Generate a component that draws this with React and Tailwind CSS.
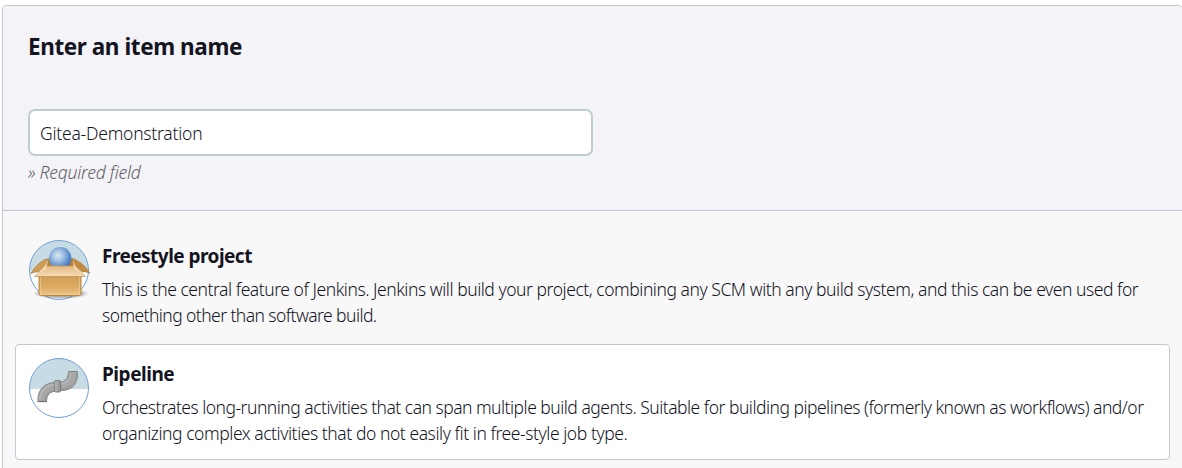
function Badge({ id, base, children }) {
  return (
    <svg viewBox="0 0 66 66" className="-mx-[3px] -my-[3px] block size-[66px] shrink-0">
      <defs>
        <clipPath id={`${id}-sky`}>
          <rect x="0" y="0" width="66" height={base} />
        </clipPath>
      </defs>
      <circle cx="33" cy="33" r="29.500" fill="#fff" />
      <circle cx="33" cy="33" r="29.500" fill="#c7dbe5" clipPath={`url(#${id}-sky)`} />
      <circle cx="33" cy="33" r="29.500" fill="none" stroke="#6fa1d8" strokeWidth="1" />
      {children}
    </svg>
  );
}

function BoxIcon() {
  return (
    <Badge id="box" base={34}>
      <defs>
        <linearGradient id="box-front" x1="0" y1="0" x2="0" y2="1">
          <stop offset="0" stopColor="#c08a40" />
          <stop offset="0.2" stopColor="#d6a25a" />
          <stop offset="0.6" stopColor="#dcab64" />
          <stop offset="1" stopColor="#efc688" />
        </linearGradient>
        <linearGradient id="box-flap" x1="0" y1="0" x2="0" y2="1">
          <stop offset="0" stopColor="#e3b981" />
          <stop offset="1" stopColor="#f5dcb6" />
        </linearGradient>
        <radialGradient id="box-ball" cx="0.4" cy="0.38" r="0.65">
          <stop offset="0" stopColor="#dce8ea" />
          <stop offset="0.35" stopColor="#a5c4e5" />
          <stop offset="0.75" stopColor="#5f90cd" />
          <stop offset="1" stopColor="#3f70b5" />
        </radialGradient>
        <radialGradient id="box-shadow">
          <stop offset="0" stopColor="#333" stopOpacity="0.65" />
          <stop offset="0.75" stopColor="#444" stopOpacity="0.35" />
          <stop offset="1" stopColor="#555" stopOpacity="0" />
        </radialGradient>
      </defs>
      <ellipse cx="35" cy="56.500" rx="28" ry="5.500" fill="url(#box-shadow)" />
      <path d="M23 21.500H46L53 31H16Z" fill="#b98136" />
      <path d="M23 21.500Q14 22.500 4.500 36.500Q8 35 13 34.500L19 29Z" fill="#cf9c57" stroke="#a97735" strokeWidth="0.7" />
      <path d="M46 21.500Q55 23.500 64 36Q60 34.500 56 34.500L50 29Z" fill="#c48b3e" stroke="#a97735" strokeWidth="0.7" />
      <circle cx="34.200" cy="21.200" r="11.200" fill="url(#box-ball)" />
      <path d="M13 37.500H55V56Q55 58.500 52.500 58.500H15.500Q13 58.500 13 56Z" fill="url(#box-front)" stroke="#b8873f" strokeWidth="1" />
      <path d="M14.500 40V57.200H53.500V40" fill="none" stroke="#f2cf99" strokeWidth="0.9" opacity="0.75" />
      <path d="M18.500 29H49.500L59.500 39.500H8.500Z" fill="url(#box-flap)" stroke="#c79759" strokeWidth="0.8" />
      <path d="M22.500 22.500L18 30L9.500 38.800L20 31.500ZM46.500 22.500L50 30L58.500 38.800L48 31.500Z" fill="#f6dfbb" opacity="0.85" />
    </Badge>
  );
}

function PipeIcon() {
  return (
    <Badge id="pipe" base={34}>
      <defs>
        <linearGradient id="pipe-joint" x1="0" x2="1">
          <stop offset="0" stopColor="#bdbdbd" />
          <stop offset="1" stopColor="#8d8d8d" />
        </linearGradient>
      </defs>
      <path d="M12 46.500C11 35 18.500 27.500 30 27.500C38.500 27.500 42.500 24.500 42.500 16.500H51.500C52 28 47 35.500 35 35.500C26 35.500 20.500 38 20.500 46.500Z" fill="#a8a8a8" stroke="#848484" strokeWidth="1" />
      <path d="M14 45.500C13.500 35 21 29.500 30 29.500C40 29.500 44.500 26 44.500 18" fill="none" stroke="#b8b8b8" strokeWidth="1.500" />
      <path d="M19.500 45C19.500 37 26 34.500 34 34.200C45 34 50.500 28 50.500 18" fill="none" stroke="#969696" strokeWidth="1" />
      <path d="M11.500 46.500H21" stroke="#777" strokeWidth="1.300" />
      <rect x="28.500" y="25.500" width="6.200" height="11.500" rx="1.500" fill="url(#pipe-joint)" stroke="#777" strokeWidth="0.9" />
    </Badge>
  );
}

function Item({ icon, title, titleClass, lines, className }) {
  return (
    <li className={`flex gap-[13px] rounded-[4px] border pl-[13px] pt-[13px] ${className}`}>
      {icon}
      <div className="min-w-0 whitespace-nowrap">
        <h2 className={`mt-[3px] text-[19px] font-bold leading-[26px] ${titleClass}`}>{title}</h2>
        <p className="mt-[7px] text-[17.500px] font-light leading-[26px]">
          {lines.map((line) => (
            <span key={line.text} className={`block ${line.className}`}>{line.text}</span>
          ))}
        </p>
      </div>
    </li>
  );
}

export default function App() {
  return (
    <div className="h-[468px] w-full overflow-hidden bg-white pl-[2px] pt-[5px] font-['Noto_Sans','Open_Sans',sans-serif] text-[#14141f]">
      <main className="-mr-px h-[480px] rounded-[4px] border border-[#bfcad0] bg-[#f8f8f8]">
        <section className="h-[205px] rounded-t-[3px] border-b border-[#bfcad0] bg-[#f3f3f8] pl-[25px] pt-[26px]">
          <label htmlFor="name" className="block w-fit text-[22.500px] font-bold leading-[30px] tracking-[-0.42px]">Enter an item name</label>
          <input
            id="name"
            defaultValue="Gitea-Demonstration"
            className="mt-[47px] block h-[47px] w-[565px] rounded-[7px] border-2 border-[#bfcdd1] bg-white px-[10px] text-[17.500px] font-light tracking-[-0.23px] outline-none"
          />
          <p className="mt-[3px] w-fit text-[17.500px] font-light italic leading-[26px] tracking-[-0.22px] text-[#606066]">» Required field</p>
        </section>
        <ul className="px-[12px] pt-[15px]">
          <Item
            icon={<BoxIcon />}
            title="Freestyle project"
            titleClass="tracking-[-0.53px]"
            className="h-[118px] border-transparent"
            lines={[
              { text: 'This is the central feature of Jenkins. Jenkins will build your project, combining any SCM with any build system, and this can be even used for', className: 'tracking-[-0.46px]' },
              { text: 'something other than software build.', className: 'tracking-[-0.57px]' },
            ]}
          />
          <Item
            icon={<PipeIcon />}
            title="Pipeline"
            titleClass="tracking-[-0.45px]"
            className="h-[116px] border-[#bfcad0] bg-white"
            lines={[
              { text: 'Orchestrates long-running activities that can span multiple build agents. Suitable for building pipelines (formerly known as workflows) and/or', className: 'tracking-[-0.51px]' },
              { text: 'organizing complex activities that do not easily fit in free-style job type.', className: 'tracking-[-0.44px]' },
            ]}
          />
        </ul>
      </main>
    </div>
  );
}
